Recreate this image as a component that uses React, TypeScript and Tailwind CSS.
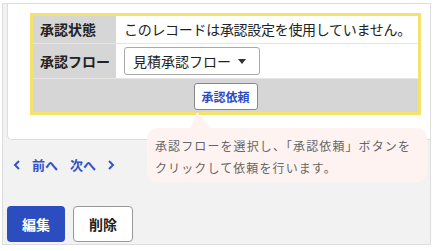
import React from "react";

export default function App() {
  const font = { fontFamily: '"Noto Sans CJK JP", "Noto Sans", sans-serif' };
  return (
    <div className="w-[434px] h-[251px] bg-white overflow-hidden" style={font}>
      <div className="relative ml-[2px] mt-[3px] w-[429px] h-[242px] border border-[#dddddd] bg-[#f2f2f2]">
        {/* card */}
        <div className="ml-[4px] h-[136px] bg-white border-l border-b border-[#dddddd] rounded-bl-[5px] pt-[9px] pl-[22px]">
          <div className="w-[391px] border-[3px] border-[#f3e26c] bg-[#d6d6d6]">
            <div className="flex h-[28px] border-b border-[#e6e6e6]">
              <div className="w-[84px] shrink-0 pl-[7px] flex items-center text-[14px] font-bold text-[#222] border-r border-white">
                承認状態
              </div>
              <div className="flex-1 bg-white pl-[7px] flex items-center text-[14px] tracking-[-0.3px] text-[#222] whitespace-nowrap">
                このレコードは承認設定を使用していません。
              </div>
            </div>
            <div className="flex h-[35px] border-b border-[#e6e6e6]">
              <div className="w-[84px] shrink-0 pl-[7px] flex items-center text-[14px] font-bold text-[#222] border-r border-white">
                承認フロー
              </div>
              <div className="flex-1 bg-white pl-[7px] flex items-center">
                <div className="w-[136px] h-[28px] border border-[#aaaaaa] rounded-[3px] bg-white flex items-center pl-[8px] text-[14px] text-[#222]">
                  <span className="flex-1">見積承認フロー</span>
                  <svg width="8" height="5" viewBox="0 0 8 5" className="mr-[13px]">
                    <polygon points="0,0 8,0 4,5" fill="#333" />
                  </svg>
                </div>
              </div>
            </div>
            <div className="h-[33px] flex justify-center pt-[4px]">
              <div className="w-[64px] h-[27px] border border-[#888888] rounded-[3px] bg-white flex items-center justify-center text-[12px] font-bold text-[#2b4cc0]">
                承認依頼
              </div>
            </div>
          </div>
        </div>

        {/* nav */}
        <div className="mt-[16px] h-[18px] flex items-center pl-[10px] text-[13px] font-bold text-[#3353c4]">
          <svg width="8" height="10" viewBox="0 0 8 10">
            <polyline points="6,1 2,5 6,9" fill="none" stroke="#3353c4" strokeWidth="2" />
          </svg>
          <span className="ml-[11px]">前へ</span>
          <span className="ml-[12px]">次へ</span>
          <svg width="8" height="10" viewBox="0 0 8 10" className="ml-[11px]">
            <polyline points="2,1 6,5 2,9" fill="none" stroke="#3353c4" strokeWidth="2" />
          </svg>
        </div>

        {/* buttons */}
        <div className="mt-[32px] flex gap-[8px] pl-[4px]">
          <div className="w-[58px] h-[36px] rounded-[4px] bg-[#2c4dbf] flex items-center justify-center text-[14px] font-bold text-white">
            編集
          </div>
          <div className="w-[60px] h-[36px] rounded-[4px] bg-white border border-[#999999] flex items-center justify-center text-[14px] font-bold text-[#222]">
            削除
          </div>
        </div>

        {/* callout */}
        <div className="absolute left-[144px] top-[124px] w-[280px] h-[54px] rounded-[10px] bg-[#fff3f1] pl-[8px] pt-[7px] text-[12px] leading-[22px] tracking-[1.1px] text-[#666666] whitespace-nowrap">
          <svg width="30" height="17" viewBox="0 0 30 17" className="absolute left-[40px] top-[-16px]">
            <polygon points="10,0 3,17 25,17" fill="#fff3f1" />
          </svg>
          <div>承認フローを選択し、「承認依頼」ボタンを</div>
          <div>クリックして依頼を行います。</div>
        </div>
      </div>
    </div>
  );
}
